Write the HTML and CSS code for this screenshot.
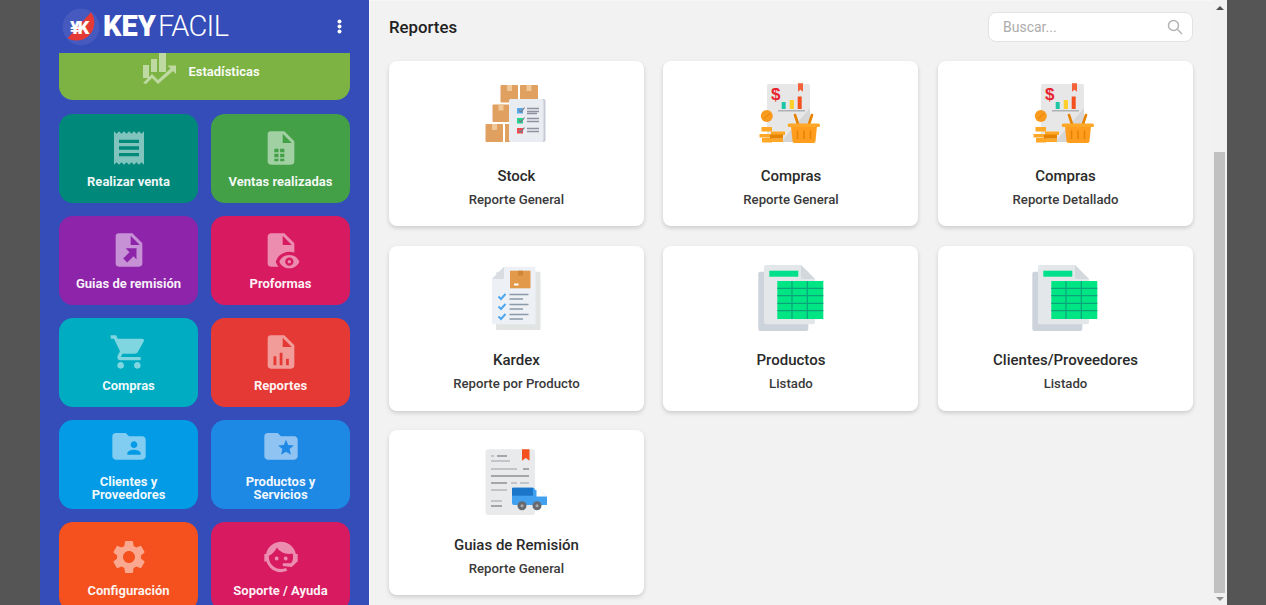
FILE: index.html
```html
<!DOCTYPE html>
<html lang="es">
<head>
<meta charset="utf-8">
<title>KeyFacil - Reportes</title>
<link rel="stylesheet" href="styles.css">
</head>
<body>
<div class="gutter gutter-left"></div>
<aside class="sidebar">
  <header class="brand">
    <svg class="brand-mark" viewBox="0 0 38 38">
      <circle cx="19" cy="19" r="18.500" fill="#4559bf"/>
      <path d="M29 4.200A18 18 0 0 1 5.500 30.300z" fill="#e53935"/>
      <text x="8" y="25.500" class="brand-mark-text">¥K</text>
    </svg>
    <div class="brand-name"><b>KEY</b><span>FACIL</span></div>
    <svg class="kebab" viewBox="0 0 5 15"><circle cx="2.500" cy="2.500" r="2"/><circle cx="2.500" cy="7.500" r="2"/><circle cx="2.500" cy="12.500" r="2"/></svg>
  </header>
  <div class="menu-viewport">
    <nav class="menu">
      <a class="tile tile-wide c-lime">
        <svg class="ico" viewBox="0 0 40 40"><path d="M4 14h6v13H4zM12 8h6v13h-6zM20 2h7v19h-7z"/><path d="M4 32l9-9 6 6L31.500 17.500l-3-3H37v8.500l-3-3L19 33l-6-6-6 6z"/></svg>
        <span>Estadísticas</span>
      </a>
      <a class="tile c-teal">
        <svg class="ico" viewBox="0 0 24 24"><path d="M18 17H6v-2h12v2zm0-4H6v-2h12v2zm0-4H6V7h12v2zM3 22l1.500-1.500L6 22l1.500-1.500L9 22l1.500-1.500L12 22l1.500-1.500L15 22l1.500-1.500L18 22l1.500-1.500L21 22V2l-1.500 1.500L18 2l-1.500 1.500L15 2l-1.500 1.500L12 2l-1.500 1.500L9 2 7.500 3.500 6 2 4.500 3.500 3 2v20z"/></svg>
        <span>Realizar venta</span>
      </a>
      <a class="tile c-green">
        <svg class="ico" viewBox="0 0 24 24"><path d="M6 2h8l6 6v12a2 2 0 0 1-2 2H6a2 2 0 0 1-2-2V4a2 2 0 0 1 2-2zM13 3.500V9h5.500zM8 12.500v2h2.500v-2zM11.500 12.500v2H14v-2zM8 15.500v2h2.500v-2zM11.500 15.500v2H14v-2zM8 18.500v1.500h2.500v-1.500zM11.500 18.500v1.500H14v-1.500z"/></svg>
        <span>Ventas realizadas</span>
      </a>
      <a class="tile c-purple">
        <svg class="ico" viewBox="0 0 24 24"><path d="M6 2h8l6 6v12a2 2 0 0 1-2 2H6a2 2 0 0 1-2-2V4a2 2 0 0 1 2-2zM13 3.500V9h5.500zM16.500 11H10l2.300 2.300-3.800 3.800 2.400 2.400 3.800-3.800 1.800 2z"/></svg>
        <span>Guias de remisión</span>
      </a>
      <a class="tile c-pink">
        <svg class="ico" viewBox="0 0 24 24"><path d="M17 18c.56 0 1 .44 1 1s-.44 1-1 1-1-.44-1-1 .44-1 1-1zM17 15c-2.730 0-5.060 1.660-6 4 .94 2.340 3.270 4 6 4s5.060-1.660 6-4c-.94-2.340-3.270-4-6-4zM17 21.500a2.500 2.500 0 1 1 0-5 2.500 2.500 0 0 1 0 5zM9.140 19.750L8.850 19l.29-.74C10.430 15.060 13.500 13 17 13c1.050 0 2.060.19 3 .55V8l-6-6H6c-1.110 0-2 .89-2 2v16a2 2 0 0 0 2 2h4.500c-.55-.69-1-1.440-1.360-2.250zM13 9V3.500L18.500 9z"/></svg>
        <span>Proformas</span>
      </a>
      <a class="tile c-cyan">
        <svg class="ico" viewBox="0 0 24 24"><path d="M17 18c-1.110 0-2 .89-2 2a2 2 0 0 0 2 2 2 2 0 0 0 2-2c0-1.110-.9-2-2-2zM1 2v2h2l3.600 7.590-1.360 2.450c-.15.28-.24.61-.24.96a2 2 0 0 0 2 2h12v-2H7.420a.25.25 0 0 1-.25-.25c0-.05.01-.09.03-.12L8.100 13h7.450c.75 0 1.410-.42 1.750-1.030l3.580-6.470c.07-.16.12-.33.12-.5a1 1 0 0 0-1-1H5.210l-.94-2zM7 18c-1.110 0-2 .89-2 2a2 2 0 0 0 2 2 2 2 0 0 0 2-2c0-1.110-.9-2-2-2z"/></svg>
        <span>Compras</span>
      </a>
      <a class="tile c-red">
        <svg class="ico" viewBox="0 0 24 24"><path d="M6 2h8l6 6v12a2 2 0 0 1-2 2H6a2 2 0 0 1-2-2V4a2 2 0 0 1 2-2zM13 3.500V9h5.500zM7.500 14.500V20h1.700v-5.500zM11.200 12.500V20h1.700v-7.500zM15 16v4h1.700v-4z"/></svg>
        <span>Reportes</span>
      </a>
      <a class="tile c-sky">
        <svg class="ico" viewBox="0 1 24 24"><path d="M20 6h-8l-2-2H4c-1.100 0-1.990.9-1.990 2L2 18c0 1.100.9 2 2 2h16c1.100 0 2-.9 2-2V8c0-1.100-.9-2-2-2zm-5 3c1.100 0 2 .9 2 2s-.9 2-2 2-2-.9-2-2 .9-2 2-2zm4 8h-8v-1c0-1.330 2.670-2 4-2s4 .67 4 2v1z"/></svg>
        <span>Clientes y Proveedores</span>
      </a>
      <a class="tile c-blue">
        <svg class="ico" viewBox="0 1 24 24"><path d="M20 6h-8l-2-2H4c-1.100 0-2 .9-2 2v12c0 1.100.9 2 2 2h16c1.100 0 2-.9 2-2V8c0-1.100-.9-2-2-2zm-2.060 11L15 15.280 12.060 17l.78-3.330-2.590-2.240 3.410-.29L15 8l1.340 3.140 3.410.29-2.590 2.240.78 3.330z"/></svg>
        <span>Productos y Servicios</span>
      </a>
      <a class="tile c-orange">
        <svg class="ico" viewBox="0 0 24 24"><path d="M19.140 12.940c.04-.3.06-.61.06-.94 0-.32-.02-.64-.07-.94l2.030-1.580c.18-.14.23-.41.12-.61l-1.920-3.320c-.12-.22-.37-.29-.59-.22l-2.390.96c-.5-.38-1.030-.7-1.620-.94l-.36-2.540c-.04-.24-.24-.41-.48-.41h-3.840c-.24 0-.43.17-.47.41l-.36 2.540c-.59.24-1.130.57-1.620.94l-2.390-.96c-.22-.08-.47 0-.59.22L2.740 8.870c-.12.21-.08.47.12.61l2.030 1.580c-.05.3-.09.63-.09.94s.02.64.07.94l-2.030 1.580c-.18.14-.23.41-.12.61l1.920 3.320c.12.22.37.29.59.22l2.390-.96c.5.38 1.030.7 1.620.94l.36 2.540c.05.24.24.41.48.41h3.840c.24 0 .44-.17.47-.41l.36-2.540c.59-.24 1.130-.56 1.620-.94l2.390.96c.22.08.47 0 .59-.22l1.920-3.320c.12-.22.07-.47-.12-.61l-2.010-1.580zM12 15.600c-1.980 0-3.600-1.620-3.600-3.600s1.620-3.600 3.600-3.600 3.600 1.620 3.600 3.600-1.620 3.600-3.600 3.600z"/></svg>
        <span>Configuración</span>
      </a>
      <a class="tile c-pink">
        <svg class="ico" viewBox="0 0 24 24"><path d="M18.720 14.760c.35-.85.54-1.760.54-2.760 0-.72-.11-1.410-.3-2.050-.65.15-1.330.23-2.040.23-3.060 0-5.770-1.510-7.420-3.840-.89 2.160-2.590 3.920-4.730 4.880-.04.25-.04.52-.04.78A7.270 7.270 0 0 0 12 19.270c1.050 0 2.060-.23 2.970-.64.57 1.090.83 1.630.81 1.630-1.640.55-2.910.82-3.780.82-2.420 0-4.730-.95-6.430-2.660-1.040-1.040-1.810-2.310-2.240-3.690H2v-4.550h1.090C3.930 6.040 7.600 2.920 12 2.920c2.400 0 4.710.95 6.420 2.660 1.270 1.260 2.120 2.870 2.470 4.600H22v4.550h-.06L18.380 18l-5.300-.6v-1.670h4.830zM9.270 11.770a1.140 1.140 0 1 1 0 2.270 1.140 1.140 0 0 1 0-2.270zM14.720 11.770a1.140 1.140 0 1 1 0 2.270 1.140 1.140 0 0 1 0-2.270z"/></svg>
        <span>Soporte / Ayuda</span>
      </a>
    </nav>
  </div>
</aside>
<main class="content">
  <header class="topbar">
    <h1 class="page-title">Reportes</h1>
    <label class="search">
      <input class="search-input" type="text" placeholder="Buscar...">
      <svg class="search-icon" viewBox="0 0 16 16"><circle cx="6.500" cy="6.500" r="5"/><path d="M10.300 10.300L15 15"/></svg>
    </label>
  </header>
  <section class="cards">
    <article class="card">
      <svg class="art" viewBox="0 0 64 64">
        <g fill="#e0a060"><rect x="16.500" y="3" width="17.500" height="17.500" rx="1"/><rect x="36" y="3" width="18" height="17.500" rx="1"/><rect x="8.500" y="22.500" width="17" height="17.500" rx="1"/><rect x="1.500" y="42" width="17.500" height="18" rx="1"/><rect x="21" y="42" width="6" height="18"/></g>
        <g fill="#f0c898"><rect x="23" y="3" width="5" height="6"/><rect x="42.500" y="3" width="5" height="6"/><rect x="14.500" y="22.500" width="5" height="6"/><rect x="8" y="42" width="5" height="6"/></g>
        <rect x="25" y="17" width="36.500" height="43" rx="2" fill="#c6cad6"/>
        <rect x="25" y="17" width="34.500" height="43" rx="2" fill="#e9edf1"/>
        <rect x="33" y="26" width="6" height="5.500" fill="#5aa7ea"/><rect x="33" y="36" width="6" height="5.500" fill="#22d58a"/><rect x="33" y="46" width="6" height="5.500" fill="#f0494f"/>
        <path d="M35 28l2 2 3.500-4.500M35 38l2 2 3.500-4.500M35 48l2 2 3.500-4.500" fill="none" stroke="#77808c" stroke-width="1.200"/>
        <path d="M43 26.500h12M43 29.500h12M43 31.500h10M43 36.500h12M43 39.500h12M43 46.500h12M43 49.500h12" stroke="#8f90a0" stroke-width="1.300"/>
      </svg>
      <h2 class="card-title">Stock</h2>
      <p class="card-sub">Reporte General</p>
    </article>
    <article class="card">
      <svg class="art" viewBox="0 0 64 64">
        <rect x="8" y="2" width="43" height="58" rx="1.500" fill="#e7e7e7"/>
        <path d="M51 26v34H22z" fill="#d6d6d6"/>
        <text x="12" y="18" class="art-dollar">$</text>
        <rect x="22.700" y="20" width="4" height="7" fill="#1ec6a8"/><rect x="30.700" y="18" width="4.300" height="9" fill="#ffd02b"/><rect x="38.700" y="14.500" width="4" height="12.500" fill="#f4511e"/>
        <rect x="19" y="28" width="27" height="1.500" fill="#aeb2b5"/>
        <path d="M39 1.300h5v8.500l-2.500-2-2.500 2z" fill="#f4623a"/>
        <circle cx="7.800" cy="34" r="6" fill="#f79a1e"/><path d="M5 37l6-6" stroke="#e58300" stroke-width="1"/>
        <g fill="#ffa726"><rect x="2.500" y="45" width="10.500" height="4.500"/><rect x="0.500" y="52" width="11" height="3.500"/><rect x="3" y="56" width="10" height="4.500"/><rect x="12" y="49.500" width="14" height="3.500"/><rect x="13" y="56.500" width="11" height="3.500"/></g>
        <rect x="11" y="52.500" width="13" height="4" fill="#e58300"/>
        <path d="M36 33l3 9M53 33l-3 9" stroke="#e58300" stroke-width="2.600" stroke-linecap="round"/>
        <path d="M32 44h26l-1.500 15a2 2 0 0 1-2 2h-19a2 2 0 0 1-2-2z" fill="#ff9d1e"/>
        <rect x="28.700" y="41.500" width="32.300" height="3.600" rx="1.500" fill="#ffa726"/>
        <path d="M38.500 48.500v8.500M45 48.500v8.500M51.500 48.500v8.500" stroke="#e58300" stroke-width="1.500"/>
      </svg>
      <h2 class="card-title">Compras</h2>
      <p class="card-sub">Reporte General</p>
    </article>
    <article class="card">
      <svg class="art" viewBox="0 0 64 64">
        <rect x="8" y="2" width="43" height="58" rx="1.500" fill="#e7e7e7"/>
        <path d="M51 26v34H22z" fill="#d6d6d6"/>
        <text x="12" y="18" class="art-dollar">$</text>
        <rect x="22.700" y="20" width="4" height="7" fill="#1ec6a8"/><rect x="30.700" y="18" width="4.300" height="9" fill="#ffd02b"/><rect x="38.700" y="14.500" width="4" height="12.500" fill="#f4511e"/>
        <rect x="19" y="28" width="27" height="1.500" fill="#aeb2b5"/>
        <path d="M39 1.300h5v8.500l-2.500-2-2.500 2z" fill="#f4623a"/>
        <circle cx="7.800" cy="34" r="6" fill="#f79a1e"/><path d="M5 37l6-6" stroke="#e58300" stroke-width="1"/>
        <g fill="#ffa726"><rect x="2.500" y="45" width="10.500" height="4.500"/><rect x="0.500" y="52" width="11" height="3.500"/><rect x="3" y="56" width="10" height="4.500"/><rect x="12" y="49.500" width="14" height="3.500"/><rect x="13" y="56.500" width="11" height="3.500"/></g>
        <rect x="11" y="52.500" width="13" height="4" fill="#e58300"/>
        <path d="M36 33l3 9M53 33l-3 9" stroke="#e58300" stroke-width="2.600" stroke-linecap="round"/>
        <path d="M32 44h26l-1.500 15a2 2 0 0 1-2 2h-19a2 2 0 0 1-2-2z" fill="#ff9d1e"/>
        <rect x="28.700" y="41.500" width="32.300" height="3.600" rx="1.500" fill="#ffa726"/>
        <path d="M38.500 48.500v8.500M45 48.500v8.500M51.500 48.500v8.500" stroke="#e58300" stroke-width="1.500"/>
      </svg>
      <h2 class="card-title">Compras</h2>
      <p class="card-sub">Reporte Detallado</p>
    </article>
    <article class="card">
      <svg class="art" viewBox="0 0 64 64">
        <rect x="12" y="4.700" width="44.500" height="58.300" rx="1.500" fill="#e2e4e4"/>
        <path d="M20 -0.300h30a1.500 1.500 0 0 1 1.500 1.500v54.600a1.500 1.500 0 0 1-1.500 1.500H9.500a1.500 1.500 0 0 1-1.500-1.500V12z" fill="#edf1f5"/>
        <path d="M8 12h10.500a1.500 1.500 0 0 0 1.500-1.500V-0.300z" fill="#d9dde2"/>
        <rect x="26" y="3.700" width="20.500" height="17.600" fill="#e29a4a"/>
        <rect x="34" y="3.700" width="5" height="5" fill="#cf863a"/>
        <rect x="30" y="16.500" width="4.500" height="2" fill="#fff"/>
        <path d="M14.500 29.500l2.500 2.500 4.500-5M14.500 39.500l2.500 2.500 4.500-5M14.500 49.500l2.500 2.500 4.500-5" fill="none" stroke="#4ba6f0" stroke-width="1.900"/>
        <path d="M25.500 27.500h19M25.500 32h13.500M25.500 37.500h19M25.500 42h13.500M25.500 47.500h19M25.500 52h13.500" stroke="#8b99a8" stroke-width="1.500"/>
      </svg>
      <h2 class="card-title">Kardex</h2>
      <p class="card-sub">Reporte por Producto</p>
    </article>
    <article class="card">
      <svg class="art" viewBox="0 0 64 64">
        <rect x="-0.700" y="4.700" width="50" height="59.300" rx="2" fill="#cdd3da"/>
        <path d="M7 -2h35l14 14v43.300a2 2 0 0 1-2 2H7a2 2 0 0 1-2-2V0a2 2 0 0 1 2-2z" fill="#e3e7ea"/>
        <path d="M42 -2l14 14H44a2 2 0 0 1-2-2z" fill="#d3d8dd"/>
        <rect x="10.300" y="3.700" width="29" height="6" fill="#00e08a"/>
        <rect x="18.300" y="14" width="46" height="38" fill="#00e583"/>
        <path d="M33 14v38M48.300 14v38M18.300 21.300h46M18.300 28.700h46M18.300 36.300h46M18.300 43.700h46" stroke="#0aa37a" stroke-width="1.200"/>
      </svg>
      <h2 class="card-title">Productos</h2>
      <p class="card-sub">Listado</p>
    </article>
    <article class="card">
      <svg class="art" viewBox="0 0 64 64">
        <rect x="-0.700" y="4.700" width="50" height="59.300" rx="2" fill="#cdd3da"/>
        <path d="M7 -2h35l14 14v43.300a2 2 0 0 1-2 2H7a2 2 0 0 1-2-2V0a2 2 0 0 1 2-2z" fill="#e3e7ea"/>
        <path d="M42 -2l14 14H44a2 2 0 0 1-2-2z" fill="#d3d8dd"/>
        <rect x="10.300" y="3.700" width="29" height="6" fill="#00e08a"/>
        <rect x="18.300" y="14" width="46" height="38" fill="#00e583"/>
        <path d="M33 14v38M48.300 14v38M18.300 21.300h46M18.300 28.700h46M18.300 36.300h46M18.300 43.700h46" stroke="#0aa37a" stroke-width="1.200"/>
      </svg>
      <h2 class="card-title">Clientes/Proveedores</h2>
      <p class="card-sub">Listado</p>
    </article>
    <article class="card">
      <svg class="art" viewBox="0 0 64 64">
        <rect x="1.500" y="-1.700" width="49.500" height="65.700" rx="3" fill="#e8eaec"/>
        <path d="M38 -1.700h7.500v11.400l-3.700-2.700-3.800 2.700z" fill="#f4511e"/>
        <path d="M7 5h3M13 5h10M7 10h19M7 18h26M39 18h6M7 25h38M7 32h16M27 32h6M36 32h9M7 39h16M7 50h11M7 55h11" stroke="#b5b8bb" stroke-width="1.700"/>
        <path d="M13 5h10M39 18h6M7 25h38M7 32h16M7 55h11" stroke="#9a9da1" stroke-width="1.700"/>
        <path d="M51 39h5l7 7v8H51z" fill="#42a0f0"/>
        <path d="M52.500 39h4l6 6.500h-10z" fill="#fff"/>
        <rect x="28" y="36.700" width="23" height="17.300" rx="2" fill="#42a0f0"/>
        <rect x="28" y="36.700" width="21" height="8" fill="#1b76c9"/>
        <circle cx="38" cy="54.700" r="4.500" fill="#666a70"/><circle cx="53" cy="54.700" r="4.500" fill="#666a70"/>
        <circle cx="38" cy="54.700" r="1.500" fill="#aaa"/><circle cx="53" cy="54.700" r="1.500" fill="#aaa"/>
      </svg>
      <h2 class="card-title">Guias de Remisión</h2>
      <p class="card-sub">Reporte General</p>
    </article>
  </section>
</main>
<div class="scrollbar">
  <span class="arrow arrow-up"></span>
  <span class="thumb"></span>
  <span class="arrow arrow-down"></span>
</div>
<div class="gutter gutter-right"></div>
</body>
</html>
```

FILE: styles.css
```css
* { box-sizing: border-box; }
html, body { height: 100%; margin: 0; }
body {
  display: flex;
  height: 605px;
  overflow: hidden;
  background: #555;
  font-family: Roboto, "Liberation Sans", sans-serif;
  color: #212121;
}
.gutter { background: #555; }
.gutter-left { width: 40px; }
.gutter-right { width: 39px; }

.sidebar {
  width: 329px;
  display: flex;
  flex-direction: column;
  background: #344db8;
}
.brand {
  height: 53px;
  flex: none;
  display: flex;
  align-items: center;
  padding: 0 27px 0 22px;
  color: #fff;
}
.brand-mark { width: 38px; height: 38px; flex: none; }
.brand-mark-text { font: 900 18.500px Roboto, sans-serif; fill: #fff; letter-spacing: -2.500px; }
.brand-name { margin-left: 3px; font-size: 29px; line-height: 53px; white-space: nowrap; }
.brand-name b { font-weight: 900; }
.brand-name span { margin-left: 2px; font-weight: 300; letter-spacing: -.7px; }
.kebab { width: 5px; height: 15px; margin-left: auto; fill: #fff; }

.menu-viewport { flex: 1; min-height: 0; overflow: hidden; }
.menu {
  display: grid;
  grid-template-columns: 139px 139px;
  grid-auto-rows: 89px;
  gap: 13.200px 13px;
  margin-top: -41.700px;
  padding: 0 19px;
}
.tile {
  display: flex;
  flex-direction: column;
  align-items: center;
  justify-content: center;
  gap: 7px;
  border-radius: 14px;
  color: rgba(255, 255, 255, .94);
  font-size: 13px;
  font-weight: 700;
  line-height: 13px;
  text-align: center;
}
.tile span { padding: 0 12px; }
.tile-wide {
  grid-column: 1 / -1;
  flex-direction: row;
  gap: 9px;
  padding: 31px 10px 0 0;
}
.tile-wide span { padding: 0; }
.ico { width: 40px; height: 40px; flex: none; fill: rgba(255, 255, 255, .5); fill-rule: evenodd; }
.c-lime { background: #7cb342; }
.c-teal { background: #00897b; }
.c-green { background: #43a047; }
.c-purple { background: #8e24aa; }
.c-pink { background: #d81b60; }
.c-cyan { background: #00acc1; }
.c-red { background: #e53935; }
.c-sky { background: #039be5; }
.c-blue { background: #1e88e5; }
.c-orange { background: #f4511e; }

.content {
  width: 843px;
  background: #f2f2f2;
  padding: 0 19px 0 20px;
  border-left: 1px solid #f7f7f7;
  border-top: 1px solid #f7f7f7;
}
.topbar {
  height: 52px;
  display: flex;
  align-items: center;
  justify-content: space-between;
  margin-left: -1px;
}
.page-title { margin: 0; font-size: 16.800px; font-weight: 500; color: #212121; }
.search {
  width: 205px;
  height: 30px;
  display: flex;
  align-items: center;
  padding: 0 9px 0 14px;
  background: #fff;
  border: 1px solid #e2e2e2;
  border-radius: 8px;
}
.search-input {
  flex: 1;
  min-width: 0;
  border: 0;
  outline: 0;
  padding: 0;
  background: transparent;
  font: 400 14px Roboto, sans-serif;
}
.search-input::placeholder { color: #acacac; opacity: 1; }
.search-icon { width: 16px; height: 16px; fill: none; stroke: #b4b4b4; stroke-width: 1.500; }

.cards {
  display: grid;
  grid-template-columns: repeat(3, 1fr);
  grid-auto-rows: 165px;
  gap: 19.500px;
  margin: 8px 0 0 -1.100px;
}
.card {
  display: flex;
  flex-direction: column;
  align-items: center;
  padding-top: 21px;
  background: #fff;
  border-radius: 8px;
  box-shadow: 0 2px 4px rgba(0, 0, 0, .16);
}
.art { width: 64px; height: 64px; flex: none; overflow: visible; }
.art-dollar { font: 700 17px "Liberation Sans", sans-serif; fill: #e8232f; }
.card-title { margin: 19.500px 0 0; font-size: 15px; font-weight: 500; line-height: 20px; color: #2a2a2a; }
.card-sub { margin: 5px 0 0; font-size: 13.200px; font-weight: 500; line-height: 18px; color: #3a3a3a; }

.scrollbar {
  width: 15px;
  display: flex;
  flex-direction: column;
  align-items: center;
  padding-top: 6px;
  background: #f1f1f1;
}
.arrow { width: 0; height: 0; border-left: 4px solid transparent; border-right: 4px solid transparent; }
.arrow-up { border-bottom: 4px solid #505050; }
.arrow-down { border-top: 4px solid #909090; margin-top: 4px; }
.thumb { width: 11px; height: 441px; margin-top: 142px; background: #c1c1c1; }
```
